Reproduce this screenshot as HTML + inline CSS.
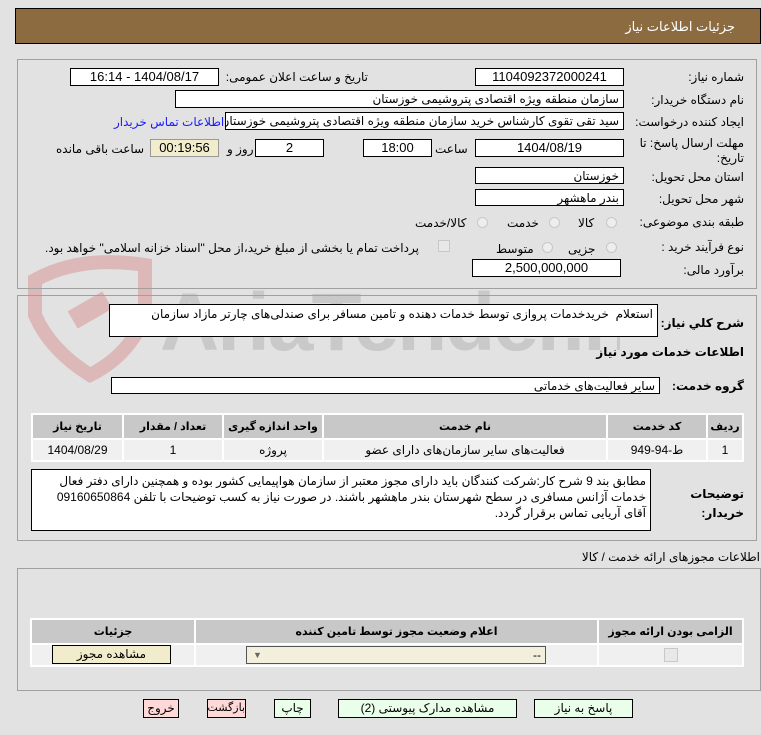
<!DOCTYPE html>
<html><head><meta charset="utf-8"><style>
body{margin:0;width:761px;height:735px;background:#e2e2e2;font-family:"Liberation Sans","DejaVu Sans",sans-serif;font-size:12px;color:#000;position:relative;overflow:hidden}
.a{position:absolute}
.box{position:absolute;background:#fff;border:1px solid #000;box-sizing:border-box;direction:rtl;padding:0 4px;line-height:16px;font-size:12px;white-space:nowrap;overflow:hidden}
.c{text-align:center}
.l{position:absolute;direction:rtl;white-space:nowrap;font-size:12px}
.lr{right:17px}
.b{font-weight:bold;font-size:12px}
.panel{position:absolute;border:1px solid #a0a0a0;box-sizing:border-box}
.rad{position:absolute;width:11px;height:11px;border-radius:50%;border:1px solid #c8c8c8;background:#eee;box-sizing:border-box}
table{border-collapse:separate;border-spacing:2px;background:#fff;table-layout:fixed}
th{background:#c8c8c8;font-size:11px;height:23px;font-weight:bold;white-space:nowrap;overflow:hidden;padding:0}
td{background:#f0f0f0;text-align:center;height:20px;font-size:12px;white-space:nowrap;padding:0}
.btn{position:absolute;border:1px solid #000;box-sizing:border-box;text-align:center;line-height:16px;font-size:12px;direction:rtl;white-space:nowrap;padding:0}
</style></head><body>
<div class="a" style="left:15px;top:8px;width:746px;height:36px;background:#8b6b3f;border:1px solid #000;box-sizing:border-box"></div>
<div class="l" style="right:26px;top:19px;color:#fff;font-size:13px">جزئیات اطلاعات نیاز</div>

<!-- watermark -->
<svg class="a" style="left:20px;top:245px" width="600" height="140">
<path d="M15 35 Q60 10 125 20 L125 70 Q110 110 70 130 Q30 105 15 70 Z" fill="none" stroke="#dcb8b8" stroke-width="14"/>
<rect x="50" y="55" width="40" height="20" fill="#dcb8b8" transform="rotate(-30 70 65)"/>
<text x="140" y="105" font-family="Liberation Sans" font-size="82" font-weight="bold" fill="#c9c9c9" letter-spacing="-2">AriaTender.net</text>
</svg>

<div class="panel" style="left:17px;top:59px;width:740px;height:230px"></div>
<div class="l lr" style="top:70px">شماره نیاز:</div>
<div class="box c" style="left:475px;top:68px;width:149px;height:18px;font-size:13px">1104092372000241</div>
<div class="l" style="right:393px;top:70px">تاریخ و ساعت اعلان عمومی:</div>
<div class="box c" style="left:70px;top:68px;width:149px;height:18px;font-size:13px">1404/08/17 - 16:14</div>

<div class="l lr" style="top:93px">نام دستگاه خریدار:</div>
<div class="box" style="left:175px;top:90px;width:449px;height:18px">سازمان منطقه ویژه اقتصادی پتروشیمی خوزستان</div>

<div class="l lr" style="top:115px">ایجاد کننده درخواست:</div>
<div class="box" style="left:225px;top:112px;width:399px;height:18px">سید تقی تقوی کارشناس خرید سازمان منطقه ویژه اقتصادی پتروشیمی خوزستان</div>
<div class="l" style="left:114px;top:115px;color:#1a1aff">اطلاعات تماس خریدار</div>

<div class="l lr" style="top:136px">مهلت ارسال پاسخ: تا</div>
<div class="l lr" style="top:151px">تاریخ:</div>
<div class="box c" style="left:475px;top:139px;width:149px;height:18px;font-size:13px">1404/08/19</div>
<div class="l" style="left:435px;top:142px">ساعت</div>
<div class="box c" style="left:363px;top:139px;width:69px;height:18px;font-size:13px">18:00</div>
<div class="box c" style="left:255px;top:139px;width:69px;height:18px;font-size:13px">2</div>
<div class="l" style="left:227px;top:142px">روز و</div>
<div class="box c" style="left:150px;top:139px;width:69px;height:18px;background:#f0eccc;border-color:#999;font-size:13px">00:19:56</div>
<div class="l" style="left:56px;top:142px">ساعت باقی مانده</div>

<div class="l lr" style="top:170px">استان محل تحویل:</div>
<div class="box" style="left:475px;top:167px;width:149px;height:17px">خوزستان</div>
<div class="l lr" style="top:192px">شهر محل تحویل:</div>
<div class="box" style="left:475px;top:189px;width:149px;height:17px">بندر ماهشهر</div>

<div class="l lr" style="top:215px">طبقه بندی موضوعی:</div>
<div class="rad" style="left:606px;top:217px"></div><div class="l" style="left:578px;top:216px">کالا</div>
<div class="rad" style="left:549px;top:217px"></div><div class="l" style="left:507px;top:216px">خدمت</div>
<div class="rad" style="left:477px;top:217px"></div><div class="l" style="left:415px;top:216px">کالا/خدمت</div>

<div class="l lr" style="top:240px">نوع فرآیند خرید :</div>
<div class="rad" style="left:606px;top:242px"></div><div class="l" style="left:568px;top:242px">جزیی</div>
<div class="rad" style="left:542px;top:242px"></div><div class="l" style="left:496px;top:242px">متوسط</div>
<div class="a" style="left:438px;top:240px;width:12px;height:12px;border:1px solid #c8c8c8;background:#e8e8e8;box-sizing:border-box"></div>
<div class="l" style="left:45px;top:241px">پرداخت تمام یا بخشی از مبلغ خرید،از محل "اسناد خزانه اسلامی" خواهد بود.</div>

<div class="l lr" style="top:263px">برآورد مالی:</div>
<div class="box c" style="left:472px;top:259px;width:149px;height:18px;font-size:13px">2,500,000,000</div>

<div class="panel" style="left:17px;top:295px;width:740px;height:246px"></div>
<div class="l lr b" style="top:316px">شرح کلي نیاز:</div>
<div class="box" style="left:109px;top:304px;width:549px;height:33px;white-space:normal;line-height:16px;padding-top:1px">استعلام&nbsp; خریدخدمات پروازی توسط خدمات دهنده و تامین مسافر برای صندلی‌های چارتر مازاد سازمان</div>
<div class="l lr b" style="top:345px">اطلاعات خدمات مورد نیاز</div>
<div class="l lr b" style="top:379px">گروه خدمت:</div>
<div class="box" style="left:111px;top:377px;width:549px;height:17px">سایر فعالیت‌های خدماتی</div>

<table class="a" style="left:31px;top:413px;width:713px;direction:rtl">
<tr><th style="width:34px">ردیف</th><th style="width:98px">کد خدمت</th><th style="width:282px">نام خدمت</th><th style="width:98px">واحد اندازه گیری</th><th style="width:98px">تعداد / مقدار</th><th>تاریخ نیاز</th></tr>
<tr><td>1</td><td>ط-94-949</td><td>فعالیت‌های سایر سازمان‌های دارای عضو</td><td>پروژه</td><td>1</td><td>1404/08/29</td></tr>
</table>

<div class="l lr b" style="top:487px">توضیحات</div>
<div class="l lr b" style="top:506px">خریدار:</div>
<div class="box" style="left:31px;top:469px;width:620px;height:62px;white-space:normal;line-height:16px;padding-top:3px">مطابق بند 9 شرح کار:شرکت کنندگان باید دارای مجوز معتبر از سازمان هواپیمایی کشور بوده و همچنین دارای دفتر فعال خدمات آژانس مسافری در سطح شهرستان بندر ماهشهر باشند. در صورت نیاز به کسب توضیحات با تلفن 09160650864 آقای آریایی تماس برقرار گردد.</div>

<div class="l" style="right:1px;top:550px">اطلاعات مجوزهای ارائه خدمت / کالا</div>
<div class="panel" style="left:17px;top:568px;width:744px;height:123px"></div>
<table class="a" style="left:30px;top:618px;width:714px;direction:rtl">
<tr><th style="width:143px">الزامی بودن ارائه مجوز</th><th style="width:401px">اعلام وضعیت مجوز توسط تامین کننده</th><th>جزئیات</th></tr>
<tr><td><span style="display:inline-block;width:12px;height:12px;border:1px solid #c8c8c8;background:#e8e8e8;vertical-align:middle"></span></td><td></td><td></td></tr>
</table>
<div class="box" style="left:246px;top:646px;width:300px;height:18px;background:#f2f0dc;border-color:#555;text-align:right">--<span style="position:absolute;left:6px;color:#666;font-size:9px">▼</span></div>
<div class="btn" style="left:52px;top:645px;width:119px;height:19px;background:#f0eccc;line-height:17px">مشاهده مجوز</div>

<div class="btn" style="left:534px;top:699px;width:99px;height:19px;background:#eaffea">پاسخ به نیاز</div>
<div class="btn" style="left:338px;top:699px;width:179px;height:19px;background:#eaffea">مشاهده مدارک پیوستی (2)</div>
<div class="btn" style="left:274px;top:699px;width:37px;height:19px;background:#eaffea">چاپ</div>
<div class="btn" style="left:207px;top:699px;width:39px;height:19px;background:#ffd8d8;font-size:11px">بازگشت</div>
<div class="btn" style="left:143px;top:699px;width:36px;height:19px;background:#ffd8d8">خروج</div>
</body></html>
